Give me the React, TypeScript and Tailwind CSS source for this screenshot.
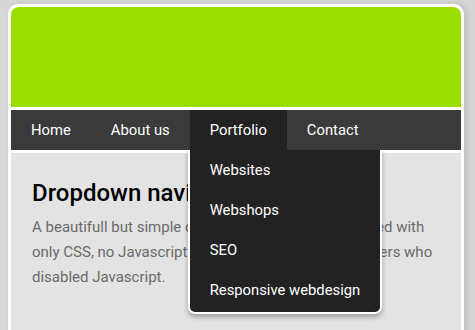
import React from 'react';

const navItems = ['Home', 'About us', 'Portfolio', 'Contact'];
const subItems = ['Websites', 'Webshops', 'SEO', 'Responsive webdesign'];

function App() {
  return (
    <div className="min-h-screen bg-[#d7d7d7] pt-1 pl-2 font-['Roboto',sans-serif]">
      <div className="w-[456px] rounded-t-[10px] bg-white p-[3px] pb-0 shadow-[3px_0_6px_rgba(0,0,0,0.12)]">
        {/* Header */}
        <div className="h-[100px] rounded-t-[8px] bg-[#9ade00]" />

        {/* Nav */}
        <nav className="mt-[3px] flex h-10 bg-[#3a3a3a]">
          {navItems.map((item) => {
            const active = item === 'Portfolio';
            return (
              <div
                key={item}
                className={
                  active
                    ? 'relative flex items-center bg-[#222222] px-5 pt-px text-[14.8px] text-white'
                    : 'flex items-center px-5 pt-px text-[14.8px] text-white'
                }
              >
                {item}
                {active && (
                  <ul className="absolute left-[-2px] top-full z-10 whitespace-nowrap rounded-b-[7px] border-2 border-t-0 border-white bg-[#222222] pb-[2px] shadow-[0_3px_5px_rgba(0,0,0,0.3)]">
                    {subItems.map((sub) => (
                      <li key={sub} className="flex h-10 items-center px-5 text-[14.8px] text-white">
                        {sub}
                      </li>
                    ))}
                  </ul>
                )}
              </div>
            );
          })}
        </nav>

        {/* Content */}
        <div className="mt-[3px] h-[200px] bg-[#e3e3e3] px-[21px] pt-[25px]">
          <h1 className="text-[24px] font-medium leading-[30px] text-black">Dropdown navigation</h1>
          <p className="mt-[7px] whitespace-nowrap text-[15px] leading-[25px] text-[#6a6a6a]">
            A beautifull but simple dropdown navigation, designed with
            <br />
            only CSS, no Javascript. This also works great for users who
            <br />
            disabled Javascript.
          </p>
        </div>
      </div>
    </div>
  );
}

export default App;
